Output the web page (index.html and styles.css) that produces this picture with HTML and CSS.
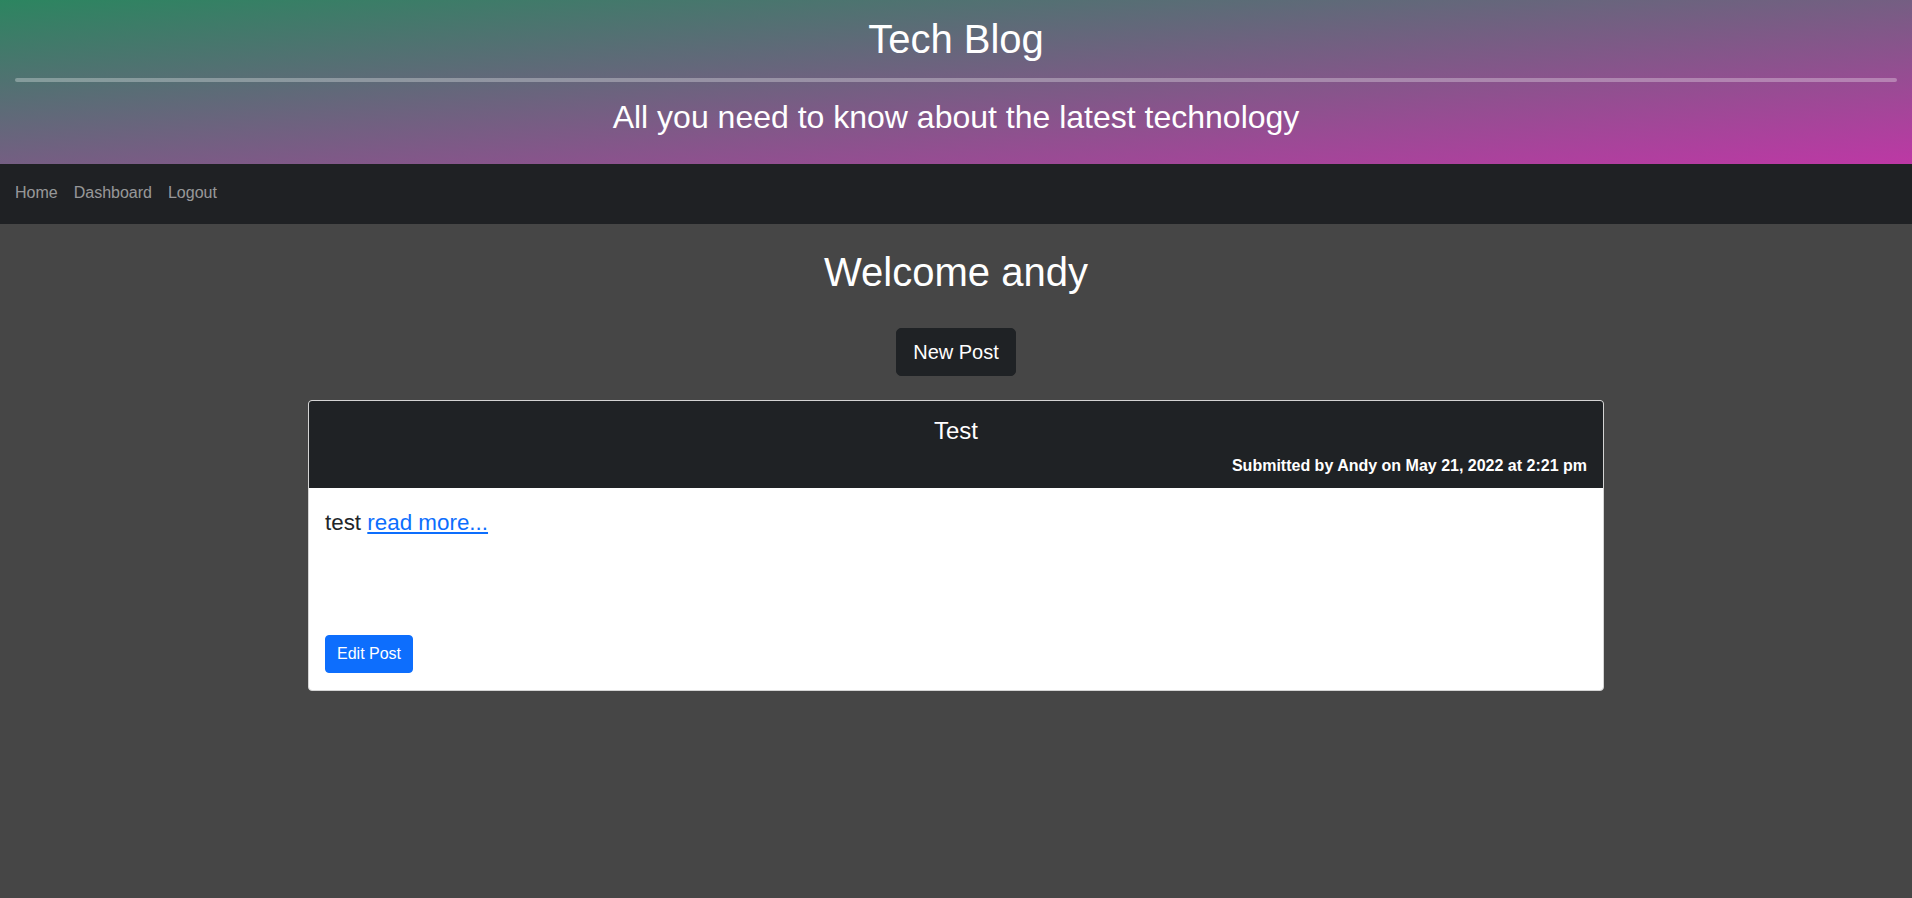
FILE: index.html
```html
<!DOCTYPE html>
<html lang="en">
<head>
<meta charset="utf-8">
<title>Tech Blog</title>
<link rel="stylesheet" href="styles.css">
</head>
<body>
<header class="site-header">
  <h1 class="site-title">Tech Blog</h1>
  <hr class="site-rule">
  <h2 class="site-tagline">All you need to know about the latest technology</h2>
</header>
<nav class="site-nav">
  <a class="nav-link" href="#">Home</a>
  <a class="nav-link" href="#">Dashboard</a>
  <a class="nav-link" href="#">Logout</a>
</nav>
<main class="main">
  <h1 class="welcome">Welcome andy</h1>
  <a class="btn-new" href="#">New Post</a>
  <div class="container">
    <article class="card">
      <div class="card-header">
        <h4 class="card-title">Test</h4>
        <p class="card-meta">Submitted by Andy on May 21, 2022 at 2:21 pm</p>
      </div>
      <div class="card-body">
        <p class="card-text">test <a class="read-more" href="#">read more...</a></p>
        <a class="btn-edit" href="#">Edit Post</a>
      </div>
    </article>
  </div>
</main>
</body>
</html>
```
FILE: styles.css
```css
* { box-sizing: border-box; }
html, body { margin: 0; padding: 0; }
body {
  font-family: "Liberation Sans", Arial, Helvetica, sans-serif;
  background: #464646;
  color: #ffffff;
  min-height: 898px;
}
.site-header {
  background: linear-gradient(to bottom right, #2c8560, #bd38a5);
  height: 164px;
  padding: 15px 15px 0;
  text-align: center;
}
.site-title {
  margin: 0;
  font-size: 40px;
  font-weight: 400;
  line-height: 1.2;
}
.site-rule {
  margin: 15px 0 0;
  border: 0;
  height: 4px;
  border-radius: 2px;
  background: rgba(255, 255, 255, 0.3);
}
.site-tagline {
  margin: 16px 0 0;
  font-size: 32px;
  font-weight: 400;
  line-height: 1.2;
}
.site-nav {
  background: #1f2124;
  height: 60px;
  display: flex;
  align-items: center;
  padding: 0 7px 2px;
}
.nav-link {
  color: rgba(255, 255, 255, 0.55);
  text-decoration: none;
  font-size: 16px;
  line-height: 24px;
  padding: 0 8px;
}
.main {
  display: flex;
  flex-direction: column;
  align-items: center;
  padding-top: 24px;
}
.welcome {
  margin: 0;
  font-size: 40px;
  font-weight: 400;
  line-height: 1.2;
}
.btn-new {
  margin-top: 32px;
  display: inline-block;
  background: #1f2225;
  color: #fff;
  text-decoration: none;
  font-size: 20px;
  line-height: 30px;
  padding: 8px 16px;
  border: 1px solid #1f2225;
  border-radius: 5px;
}
.container {
  width: 1320px;
  padding: 0 12px;
  margin-top: 24px;
}
.card {
  background: #fff;
  border: 1px solid #d4d4d4;
  border-radius: 4px;
  overflow: hidden;
}
.card-header {
  background: #1f2225;
  text-align: center;
  padding: 16px 16px 10px;
}
.card-title {
  margin: 0 0 8px;
  font-size: 24px;
  font-weight: 400;
  line-height: 1.2;
}
.card-meta {
  margin: 0;
  text-align: right;
  font-weight: 700;
  font-size: 16px;
  line-height: 24px;
}
.card-body {
  padding: 18px 16px 17px;
  color: #212529;
}
.card-text {
  margin: 0 0 96px;
  font-size: 22.4px;
  line-height: 1.5;
}
.read-more { color: #0d6efd; text-decoration: underline; }
.btn-edit {
  display: inline-block;
  background: #0d6efd;
  border: 1px solid #0d6efd;
  color: #fff;
  text-decoration: none;
  font-size: 16px;
  line-height: 24px;
  padding: 6px 11px;
  border-radius: 4px;
}
```
